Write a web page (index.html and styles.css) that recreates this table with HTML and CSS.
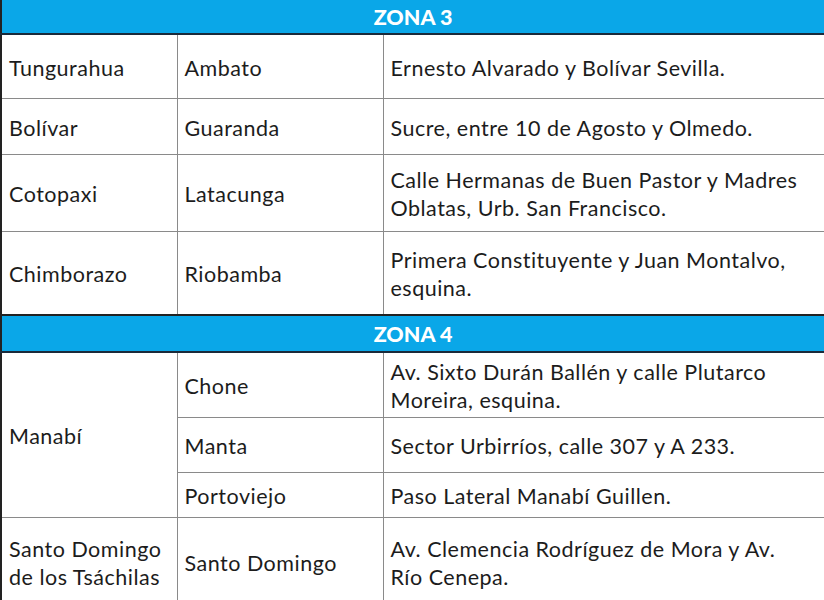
FILE: index.html
```html
<!DOCTYPE html>
<html lang="es">
<head>
<meta charset="utf-8">
<title>Zonas</title>
<link rel="stylesheet" href="styles.css">
</head>
<body>
<table class="zones">
  <colgroup>
    <col class="c1"><col class="c2"><col class="c3">
  </colgroup>
  <tr class="zone"><th colspan="3">ZONA 3</th></tr>
  <tr class="r1"><td>Tungurahua</td><td>Ambato</td><td>Ernesto Alvarado y Bolívar Sevilla.</td></tr>
  <tr class="r2"><td>Bolívar</td><td>Guaranda</td><td>Sucre, entre 10 de Agosto y Olmedo.</td></tr>
  <tr class="r3"><td>Cotopaxi</td><td>Latacunga</td><td>Calle Hermanas de Buen Pastor y Madres Oblatas, Urb. San Francisco.</td></tr>
  <tr class="r4"><td>Chimborazo</td><td>Riobamba</td><td>Primera Constituyente y Juan Montalvo, esquina.</td></tr>
  <tr class="zone z2"><th colspan="3">ZONA 4</th></tr>
  <tr class="r5"><td rowspan="3">Manabí</td><td>Chone</td><td>Av. Sixto Durán Ballén y calle Plutarco Moreira, esquina.</td></tr>
  <tr class="r6"><td>Manta</td><td>Sector Urbirríos, calle 307 y A 233.</td></tr>
  <tr class="r7"><td>Portoviejo</td><td>Paso Lateral Manabí Guillen.</td></tr>
  <tr class="r8"><td>Santo Domingo de los Tsáchilas</td><td>Santo Domingo</td><td>Av. Clemencia Rodríguez de Mora y Av. Río&nbsp;Cenepa.</td></tr>
</table>
</body>
</html>
```

FILE: styles.css
```css
html, body {
  margin: 0;
  padding: 0;
  background: #ffffff;
  overflow: hidden;
}
.zones {
  width: 824px;
  border-collapse: collapse;
  table-layout: fixed;
  font-family: "Lato", "Liberation Sans", sans-serif;
  font-size: 21.5px;
  letter-spacing: 0.5px;
  color: #1c1c1c;
  border-left: 2px solid #222;
  border-right: 2px solid #333;
}
.c1 { width: 176px; }
.c2 { width: 206px; }
.c3 { width: 442px; }
.zones th {
  background: #0aa7e8;
  color: #ffffff;
  font-weight: 900;
  font-size: 21.5px;
  text-align: center;
  padding: 0;
  height: 33px;
  border-bottom: 2px solid #1a2a3a;
  letter-spacing: 0;
}
.zones td {
  border: 1px solid #8a8a8a;
  padding: 2px 6px 0 7px;
  vertical-align: middle;
  line-height: 28px;
  text-align: left;
}
.zones td:first-child { padding-left: 7px; }
.r1 td { height: 61px; }
.r2 td { height: 53px; }
.r3 td { height: 74px; }
.r4 td { height: 80px; border-bottom: 2px solid #222; }
.z2 th { height: 35px; }
.r5 td { height: 62px; }
.r6 td { height: 52px; }
.r7 td { height: 42px; }
.r8 td { height: 86px; border-top: 1px solid #444; }
```
